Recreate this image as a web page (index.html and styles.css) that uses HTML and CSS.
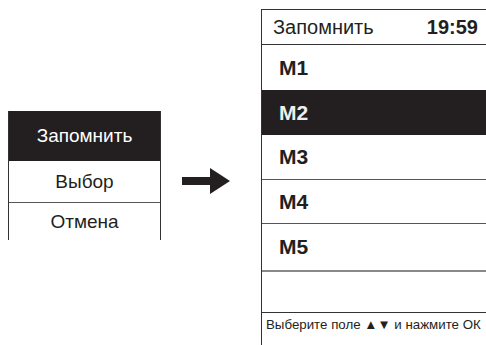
FILE: index.html
```html
<!DOCTYPE html>
<html lang="ru">
<head>
    <meta charset="UTF-8">
    <title>Запомнить</title>
    <meta name="viewport" content="width=device-width, initial-scale=1.0">
    <link rel="stylesheet" href="styles.css">
</head>
<body>
    <div class="scene">
        <!-- popup menu -->
        <div class="menu">
            <div class="menu-item active">Запомнить</div>
            <div class="menu-item">Выбор</div>
            <div class="menu-item last">Отмена</div>
        </div>

        <svg class="arrow" width="48" height="26" viewBox="0 0 48 26">
            <path d="M0 9H28V0L48 13L28 26V17H0Z" fill="#231f20"/>
        </svg>

        <!-- device screen -->
        <div class="screen">
            <div class="screen-head">
                <span>Запомнить</span>
                <span class="clock">19:59</span>
            </div>
            <div class="slot">M1</div>
            <div class="slot selected">M2</div>
            <div class="slot line">M3</div>
            <div class="slot line short">M4</div>
            <div class="slot line-grey">M5</div>
            <div class="slot empty"></div>
            <div class="hint">Выберите поле ▲▼ и нажмите ОК</div>
        </div>
    </div>
</body>
</html>
```

FILE: styles.css
```css
html, body {
    margin: 0;
    height: 100%;
    overflow: hidden;
    background: #fff;
}
body {
    font-family: "Liberation Sans", Arial, sans-serif;
    color: #231f20;
}
.scene {
    display: flex;
    align-items: flex-start;
}
.menu {
    flex-shrink: 0;
    margin: 111px 0 0 8px;
    width: 153px;
    box-sizing: border-box;
    border-left: 1px solid #333;
    border-right: 1px solid #333;
}
.menu-item {
    height: 42px;
    display: flex;
    align-items: center;
    justify-content: center;
    font-size: 19px;
    border-bottom: 1px solid #555;
    box-sizing: border-box;
}
.menu-item.active {
    height: 50px;
    background: #231f20;
    color: #fff;
    border-bottom: none;
}
.menu-item.last {
    height: 37px;
    border-bottom: none;
}
.arrow {
    flex-shrink: 0;
    margin: 168px 0 0 21px;
    display: block;
}
.screen {
    flex-shrink: 0;
    margin: 9px 0 0 31px;
    width: 240px;
    border-top: 1px solid #333;
    border-left: 1px solid #333;
}
.screen-head {
    height: 35px;
    box-sizing: border-box;
    display: flex;
    align-items: center;
    justify-content: space-between;
    padding: 0 24px 0 11px;
    font-size: 20px;
    border-bottom: 1px solid #333;
}
.clock {
    font-weight: bold;
}
.slot {
    height: 45px;
    box-sizing: border-box;
    display: flex;
    align-items: center;
    padding-left: 17px;
    font-size: 21px;
    font-weight: bold;
}
.slot.selected {
    background: #231f20;
    color: #eee;
}
.slot.line {
    border-bottom: 1px solid #555;
}
.slot.short {
    height: 44px;
}
.slot.line-grey {
    height: 48px;
    border-bottom: 2px solid #888;
}
.slot.empty {
    height: 41px;
    border-bottom: 1px solid #333;
}
.hint {
    padding: 4px 0 20px 4px;
    font-size: 13.3px;
    white-space: nowrap;
}
```
